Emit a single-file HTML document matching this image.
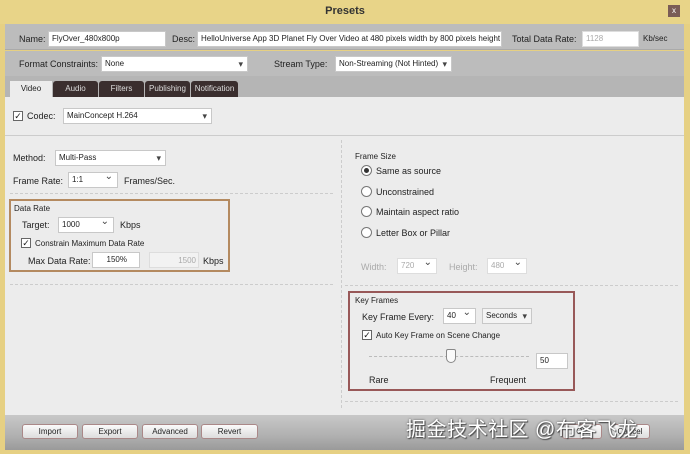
<!DOCTYPE html>
<html><head><style>
*{box-sizing:border-box;margin:0;padding:0}
body{width:690px;height:454px;background:#e6d083;font-family:"Liberation Sans",sans-serif;font-size:9px;color:#222;position:relative;overflow:hidden}
.a{position:absolute}
.in{position:absolute;background:#fff;border:1px solid #c8c8c8;font-size:8px;padding:2px 3px;line-height:10px;height:16px;white-space:nowrap;overflow:hidden}
.dd:after{content:"▾";position:absolute;right:4px;top:2px;font-size:9px;color:#444}
.v:after{content:"⌄";position:absolute;right:4px;top:-1px;font-size:10px;color:#444}
.cb{position:absolute;width:10px;height:10px;border:1px solid #666;background:#fff;font-size:9px;line-height:8px;text-align:center}
.rd{position:absolute;width:11px;height:11px;border:1px solid #777;border-radius:50%;background:#fff}
.tab{position:absolute;top:81px;height:16px;background:#3a2e2e;color:#ddd;font-size:8px;text-align:center;line-height:16px;border-radius:3px 3px 0 0}
.btn{position:absolute;top:424px;height:15px;background:linear-gradient(#fafafa,#ddd);border:1px solid #a88;border-radius:3px;font-size:8px;text-align:center;line-height:13px}
.dash{position:absolute;border-top:1px dashed #ccc;height:0}
</style></head><body>
<div class="a" style="left:0;top:0;width:690px;height:24px;background:#e8d488"></div>
<div class="a" style="left:0;top:5px;width:690px;text-align:center;font-size:11px;font-weight:bold;color:#333">Presets</div>
<div class="a" style="left:668px;top:5px;width:12px;height:12px;background:#7a5c56;color:#fff;font-size:8px;text-align:center;line-height:12px">x</div>
<div class="a" style="left:5px;top:24px;width:679px;height:26px;background:#bcbcbc;border-bottom:1px solid #aaa"></div>
<div class="a" style="left:5px;top:51px;width:679px;height:25px;background:#bcbcbc"></div>
<div class="a" style="left:5px;top:76px;width:679px;height:21px;background:#b5b5b5"></div>
<div class="a" style="left:5px;top:97px;width:679px;height:318px;background:#ececec"></div>
<div class="a" style="left:5px;top:415px;width:679px;height:35px;background:linear-gradient(#c8c8c8,#b0b0b0 60%,#9a9a9a)"></div>

<div class="a" style="left:19px;top:34px;font-size:9px">Name:</div>
<div class="in" style="left:48px;top:31px;width:118px">FlyOver_480x800p</div>
<div class="a" style="left:172px;top:34px;font-size:9px">Desc:</div>
<div class="in" style="left:197px;top:31px;width:305px">HelloUniverse App 3D Planet Fly Over Video at 480 pixels width by 800 pixels height</div>
<div class="a" style="left:512px;top:34px;font-size:9px">Total Data Rate:</div>
<div class="in" style="left:582px;top:31px;width:57px;color:#aaa;border-color:#ddd">1128</div>
<div class="a" style="left:643px;top:34px;font-size:8px">Kb/sec</div>

<div class="a" style="left:19px;top:59px;font-size:9px">Format Constraints:</div>
<div class="in dd" style="left:101px;top:56px;width:147px">None</div>
<div class="a" style="left:274px;top:59px;font-size:9px">Stream Type:</div>
<div class="in dd" style="left:335px;top:56px;width:117px">Non-Streaming (Not Hinted)</div>

<div class="a" style="left:10px;top:81px;width:42px;height:16px;background:#ececec;font-size:8px;text-align:center;line-height:16px">Video</div>
<div class="tab" style="left:53px;width:45px">Audio</div>
<div class="tab" style="left:99px;width:45px">Filters</div>
<div class="tab" style="left:145px;width:45px">Publishing</div>
<div class="tab" style="left:191px;width:47px">Notification</div>

<div class="cb" style="left:13px;top:111px">✓</div>
<div class="a" style="left:27px;top:111px;font-size:9px">Codec:</div>
<div class="in dd" style="left:63px;top:108px;width:149px">MainConcept H.264</div>
<div class="a" style="left:5px;top:135px;width:679px;border-top:1px solid #ccc"></div>

<div class="a" style="left:13px;top:153px;font-size:9px">Method:</div>
<div class="in dd" style="left:55px;top:150px;width:111px">Multi-Pass</div>
<div class="a" style="left:13px;top:176px;font-size:9px">Frame Rate:</div>
<div class="in v" style="left:68px;top:172px;width:50px">1:1</div>
<div class="a" style="left:124px;top:176px;font-size:9px">Frames/Sec.</div>
<div class="dash" style="left:10px;top:193px;width:323px"></div>

<div class="a" style="left:9px;top:199px;width:221px;height:73px;border:2px solid #b48a60"></div>
<div class="a" style="left:14px;top:204px;font-size:8px">Data Rate</div>
<div class="a" style="left:22px;top:220px;font-size:9px">Target:</div>
<div class="in v" style="left:58px;top:217px;width:56px">1000</div>
<div class="a" style="left:120px;top:220px;font-size:9px">Kbps</div>
<div class="cb" style="left:21px;top:238px">✓</div>
<div class="a" style="left:35px;top:239px;font-size:8px">Constrain Maximum Data Rate</div>
<div class="a" style="left:28px;top:256px;font-size:9px">Max Data Rate:</div>
<div class="in" style="left:92px;top:252px;width:48px;text-align:right;padding-right:12px">150%</div>
<div class="a" style="left:149px;top:252px;width:50px;height:16px;background:#f2f2f2;border:1px solid #ddd;color:#aaa;font-size:8px;text-align:right;padding:3px 2px">1500</div>
<div class="a" style="left:203px;top:256px;font-size:9px">Kbps</div>
<div class="dash" style="left:10px;top:284px;width:323px"></div>
<div class="a" style="left:341px;top:140px;height:268px;border-left:1px dashed #ccc"></div>

<div class="a" style="left:355px;top:152px;font-size:8px">Frame Size</div>
<div class="rd" style="left:361px;top:165px"><div class="a" style="left:2px;top:2px;width:5px;height:5px;border-radius:50%;background:#333"></div></div>
<div class="a" style="left:376px;top:166px;font-size:9px">Same as source</div>
<div class="rd" style="left:361px;top:186px"></div>
<div class="a" style="left:376px;top:187px;font-size:9px">Unconstrained</div>
<div class="rd" style="left:361px;top:206px"></div>
<div class="a" style="left:376px;top:207px;font-size:9px">Maintain aspect ratio</div>
<div class="rd" style="left:361px;top:227px"></div>
<div class="a" style="left:376px;top:228px;font-size:9px">Letter Box or Pillar</div>
<div class="a" style="left:361px;top:262px;font-size:9px;color:#aaa">Width:</div>
<div class="in v" style="left:397px;top:258px;width:40px;color:#aaa;border-color:#ddd">720</div>
<div class="a" style="left:449px;top:262px;font-size:9px;color:#aaa">Height:</div>
<div class="in v" style="left:487px;top:258px;width:40px;color:#aaa;border-color:#ddd">480</div>
<div class="dash" style="left:345px;top:285px;width:333px"></div>

<div class="a" style="left:348px;top:291px;width:227px;height:100px;border:2px solid #985858"></div>
<div class="a" style="left:355px;top:296px;font-size:8px">Key Frames</div>
<div class="a" style="left:362px;top:312px;font-size:9px">Key Frame Every:</div>
<div class="in v" style="left:443px;top:308px;width:33px">40</div>
<div class="in dd" style="left:482px;top:308px;width:50px;background:#f4f4f4">Seconds</div>
<div class="cb" style="left:362px;top:330px">✓</div>
<div class="a" style="left:376px;top:331px;font-size:8px">Auto Key Frame on Scene Change</div>
<div class="dash" style="left:369px;top:356px;width:160px;border-color:#bbb"></div>
<div class="a" style="left:446px;top:349px;width:10px;height:14px;background:#fafafa;border:1px solid #888;border-radius:2px 2px 5px 5px"></div>
<div class="in" style="left:536px;top:353px;width:32px">50</div>
<div class="a" style="left:369px;top:375px;font-size:9px">Rare</div>
<div class="a" style="left:490px;top:375px;font-size:9px">Frequent</div>
<div class="dash" style="left:345px;top:401px;width:333px"></div>

<div class="btn" style="left:22px;width:56px">Import</div>
<div class="btn" style="left:82px;width:56px">Export</div>
<div class="btn" style="left:142px;width:56px">Advanced</div>
<div class="btn" style="left:201px;width:57px">Revert</div>
<div class="btn" style="left:562px;width:40px">OK</div>
<div class="btn" style="left:610px;width:40px">Cancel</div>
<div class="a" style="left:406px;top:413px;font-size:20px;letter-spacing:0.5px;color:#fff;font-family:'Liberation Sans','Noto Sans CJK SC',sans-serif;text-shadow:0 0 2px #555,1px 1px 1px #444">掘金技术社区 @布客飞龙</div>
</body></html>
